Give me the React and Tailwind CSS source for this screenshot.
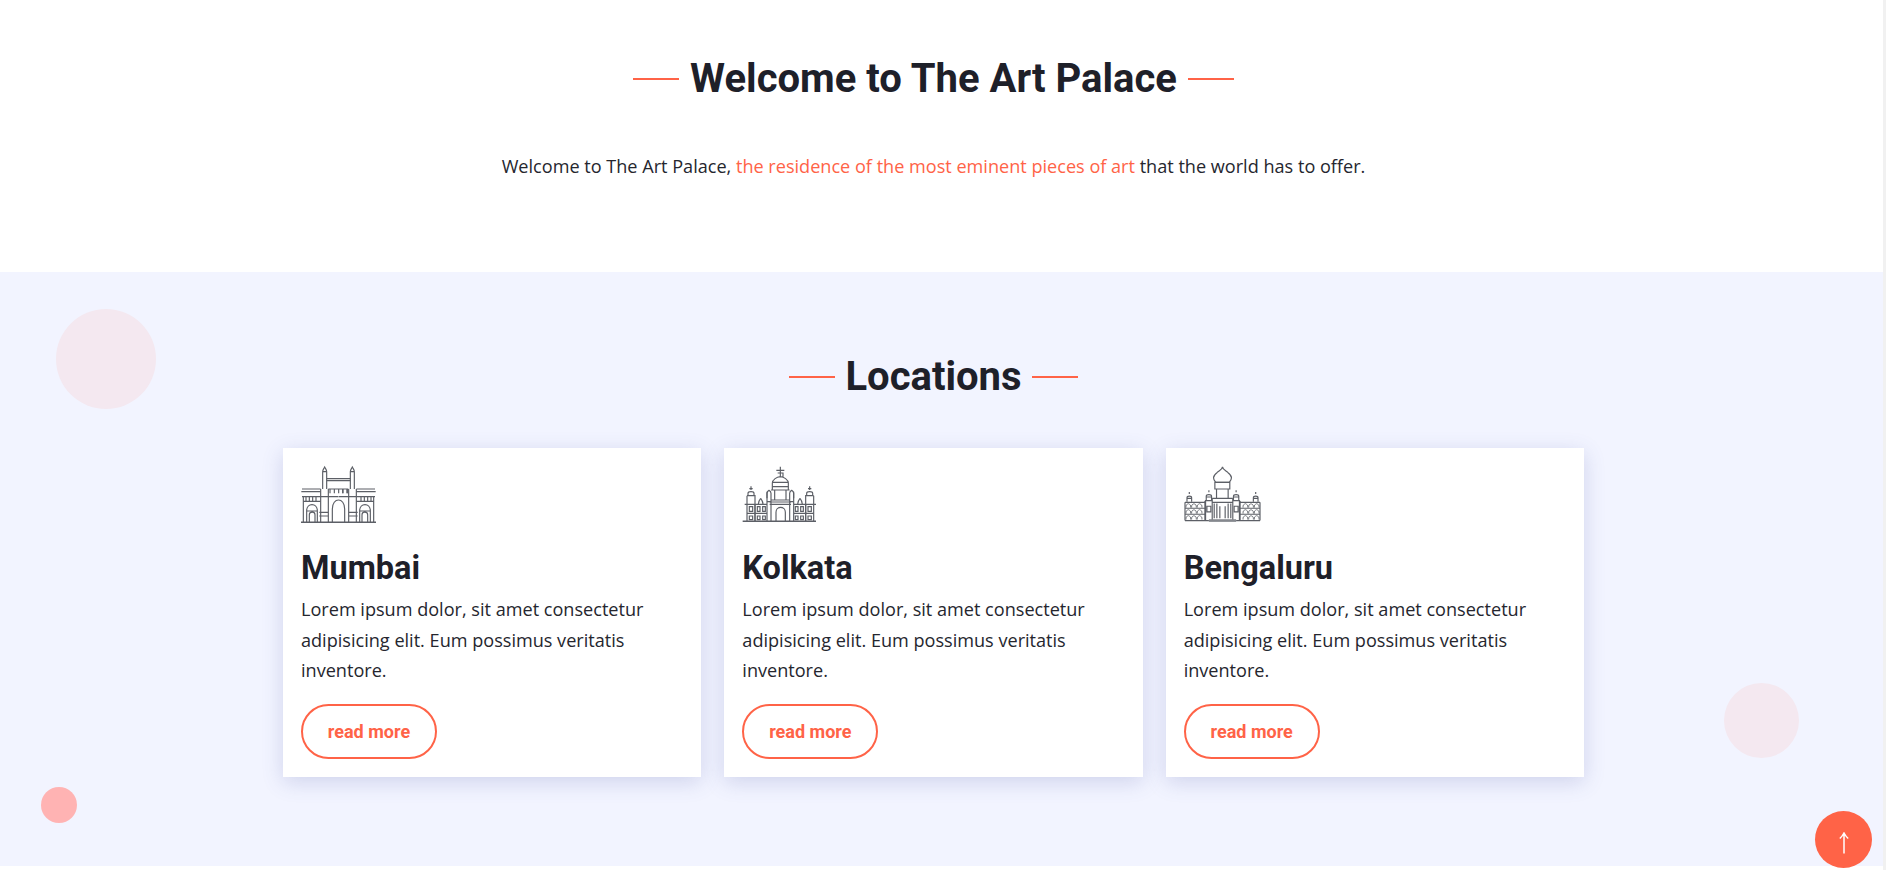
import React from "react";

const INK = "#5c5f66";

const MumbaiSide = () => (
  <>
    <path d="M128 130V78C128 72 131 70 134 64C137 70 140 72 140 78V130M128 78H140" />
    <path d="M66 130H122M64 138H122M66 153H122M70 153V231M70 167H122M78 153V167M88 153V167M98 153V167M108 153V167" />
    <path d="M80 231V195C80 171 112 171 112 195V231M80 196H112M88 231V207C88 197 105 197 105 207V231" />
    <path d="M122 130V231M145 130V231M118 200H145M118 211H145" />
    <path d="M122 153H175M150 130V143M163 130V143" />
  </>
);

const KolkataSide = () => (
  <>
    <path d="M77 124V135M72 131H82M68 152V145C68 138 86 138 86 145V152M65 152H89V231M65 152V231" />
    <path d="M58 178H125M65 205H125M89 178V231M125 140V231" />
    <path d="M106 160C101 166 99 170 99 178M106 160C111 166 113 170 113 178" />
    <path d="M72 185H82V199H72ZM72 213H82V224H72ZM96 185H104V199H96ZM96 213H104V224H96ZM112 185H120V199H112ZM112 213H120V224H112Z" />
    <path d="M125 160V145C125 140 131 136 131 136C131 136 137 140 137 145V231M125 170H137" />
  </>
);

const BengaluruSide = () => (
  <>
    <path d="M58 172H118M58 190H118M58 208H118M58 227H130M58 172V227M118 168V227" />
    {[172, 190, 208].map((y) => (
      <g key={y} strokeWidth="2.5">
        {[68, 85, 102].map((x) => (
          <path key={x} d={`M${x - 7} ${y + 16}V${y + 11}C${x - 7} ${y + 6} ${x} ${y + 5} ${x} ${y + 4}C${x} ${y + 5} ${x + 7} ${y + 6} ${x + 7} ${y + 11}V${y + 16}`} />
        ))}
      </g>
    ))}
    <path d="M71 141V147M64 170V158C64 152 78 152 78 158V170M64 160H78" />
    <path d="M130 136V142M122 165V154C122 147 138 147 138 154V165M122 156H138" />
    <path d="M118 167H140M120 167V225M124 184H136V201H124Z" />
  </>
);

const Mirror = ({ axis, children }) => (
  <>
    {children}
    <g transform={`translate(${axis * 2} 0) scale(-1 1)`}>{children}</g>
  </>
);

const MumbaiIcon = () => (
  <svg width="77" height="58" viewBox="63 58 231 174" fill="none" stroke={INK} strokeWidth="3.5">
    <Mirror axis={175.5}>
      <MumbaiSide />
    </Mirror>
    <path d="M140 99H211M140 105H211M145 130H205M157 231V190C157 154 194 154 194 190V231" />
    <path d="M176 130V143M189 130V143M202 130V143" />
    <path d="M63 230H288" strokeWidth="4.5" />
  </svg>
);

const KolkataIcon = () => (
  <svg width="75" height="57" viewBox="50 60 225 171" fill="none" stroke={INK} strokeWidth="3.5">
    <Mirror axis={165}>
      <KolkataSide />
    </Mirror>
    <path d="M165 65V95M153 76H177M157 84H173V95M141 135V115C141 103 155 96 165 95C175 96 189 103 189 115V135" />
    <path d="M141 112H189M141 125H189M137 135H193M148 135V165M182 135V165M137 165H193M133 171H197M133 178H197" />
    <path d="M152 231V202C152 182 180 182 180 202V231" />
    <path d="M52 229H272" strokeWidth="4.5" />
  </svg>
);

const BengaluruIcon = () => (
  <svg width="77" height="57" viewBox="55 60 232 171" fill="none" stroke={INK} strokeWidth="3.5">
    <Mirror axis={171}>
      <BengaluruSide />
    </Mirror>
    <path d="M171 65C171 72 162 76 155 82C147 88 144 92 144 98C144 104 148 108 151 112H191C194 108 198 104 198 98C198 92 195 88 187 82C180 76 171 72 171 65Z" />
    <path d="M148 112H193V132H148ZM153 132V160M188 132V160M140 160H202M140 172H202M140 160V225M202 160V225" />
    <path d="M146 176V220M154 176V220M163 184V220M179 184V220M188 176V220M196 176V220" />
    <path d="M130 227H212" strokeWidth="8" stroke="#85888e" />
  </svg>
);

const Title = ({ children, gap = "gap-[11px]" }) => (
  <div className={`flex items-center justify-center ${gap}`}>
    <span className="h-[2px] w-[46px] bg-[#ff6347]" />
    <h2 className="font-['Roboto',sans-serif] text-[40px] font-bold leading-[48px] text-[#1e2029]">{children}</h2>
    <span className="h-[2px] w-[46px] bg-[#ff6347]" />
  </div>
);

const locations = [
  { name: "Mumbai", Icon: MumbaiIcon },
  { name: "Kolkata", Icon: KolkataIcon },
  { name: "Bengaluru", Icon: BengaluruIcon },
];

const LocationCard = ({ name, Icon }) => (
  <div className="bg-white px-[18px] pt-[17px] pb-[18px] shadow-[0_5px_20px_rgba(70,80,160,0.2)]">
    <div className="h-[58px]">
      <Icon />
    </div>
    <h3 className="mt-[26px] font-['Roboto',sans-serif] text-[32.5px] font-bold leading-[38px] text-[#1e2029]">{name}</h3>
    <p className="mt-[7px] text-[18.1px] leading-[30.6px] text-[#25262e]">
      Lorem ipsum dolor, sit amet consectetur adipisicing elit. Eum possimus veritatis inventore.
    </p>
    <button className="mt-[18px] block h-[55px] w-[136px] rounded-[28px] border-2 border-[#ff6347] font-['Roboto',sans-serif] text-[18px] font-bold text-[#ff6347]">
      read more
    </button>
  </div>
);

export default function App() {
  return (
    <div className="relative h-[870px] overflow-hidden bg-white font-['Open_Sans',sans-serif]">
      <section className="h-[272px] pt-[55px] pr-[19px] text-center">
        <Title>Welcome to The Art Palace</Title>
        <p className="mt-[51px] text-[18.1px] leading-[24px] text-[#25262e]">
          Welcome to The Art Palace, <span className="text-[#ff6347]">the residence of the most eminent pieces of art</span> that the world has to offer.
        </p>
      </section>

      <section className="relative h-[594px] bg-[#f2f4ff] pt-[81px] pr-[19px]">
        <span className="absolute left-[56px] top-[37px] h-[100px] w-[100px] rounded-full bg-[#f4e8f0]" />
        <span className="absolute left-[1724px] top-[411px] h-[75px] w-[75px] rounded-full bg-[#f4e8f0]" />
        <span className="absolute left-[41px] top-[515px] h-[36px] w-[36px] rounded-full bg-[#ffb3b3]" />
        <Title gap="gap-[10px]">Locations</Title>
        <div className="mx-auto mt-[47px] grid w-[1301px] grid-cols-3 gap-[23px]">
          {locations.map((l) => (
            <LocationCard key={l.name} {...l} />
          ))}
        </div>
      </section>

      <div className="absolute right-0 top-0 h-full w-[3px] bg-[#f1f1f1]" />
      <div className="absolute left-[1815px] top-[811px] flex h-[57px] w-[57px] items-center justify-center rounded-full bg-[#ff6347]">
        <svg className="mt-[6px]" width="10" height="22" viewBox="0 0 10 22" fill="none" stroke="#fff" strokeWidth="1.5">
          <path d="M5 21.5V1M0.8 6.5C2.5 5 4 3 5 1C6 3 7.5 5 9.2 6.5" />
        </svg>
      </div>
    </div>
  );
}
